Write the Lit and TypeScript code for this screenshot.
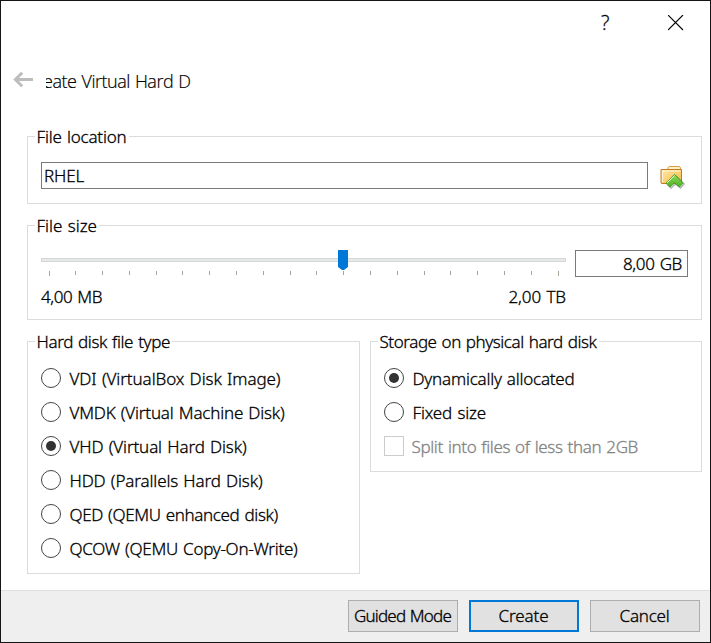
import { LitElement, html, css, svg } from "lit";
import { customElement, property } from "lit/decorators.js";

/** One line of text whose tracking is adjusted to fill a given advance width. */
@customElement("fit-text")
class FitText extends LitElement {
  @property() text = "";
  @property({ type: Number }) w = 0;
  static styles = css`
    :host { display: inline-block; white-space: pre; flex: none; word-spacing: 1px; }
  `;
  updated() {
    const span = this.renderRoot.querySelector("span") as HTMLElement;
    span.style.letterSpacing = "0px";
    const natural = span.getBoundingClientRect().width;
    span.style.letterSpacing = `${(this.w - natural) / this.text.length}px`;
  }
  render() {
    return html`<span>${this.text}</span>`;
  }
}

@customElement("group-box")
class GroupBox extends LitElement {
  @property() label = "";
  @property({ type: Number }) w = 0;
  static styles = css`
    :host { display: block; box-sizing: border-box; border: 1px solid #dcdcdc; position: relative; }
    .legend { position: absolute; left: 7px; top: -12px; height: 24px; line-height: 24px; padding: 0 2px 0 1.5px; background: #fff; }
  `;
  render() {
    return html`<div class="legend"><fit-text .text=${this.label} .w=${this.w}></fit-text></div><slot></slot>`;
  }
}

interface Option { text: string; w: number; on?: boolean }

const TYPES: Option[] = [
  { text: "VDI (VirtualBox Disk Image)", w: 211 },
  { text: "VMDK (Virtual Machine Disk)", w: 215 },
  { text: "VHD (Virtual Hard Disk)", w: 177, on: true },
  { text: "HDD (Parallels Hard Disk)", w: 193 },
  { text: "QED (QEMU enhanced disk)", w: 208.5 },
  { text: "QCOW (QEMU Copy-On-Write)", w: 228 },
];
const STORAGE: Option[] = [
  { text: "Dynamically allocated", w: 162, on: true },
  { text: "Fixed size", w: 73.5 },
];
const TICKS = Array.from({ length: 20 }, (_, i) => Math.floor(8 + (i * 509) / 19 + 0.01));

@customElement("app-root")
class AppRoot extends LitElement {
  static styles = css`
    :host { display: block; font: 17px/24px "Noto Sans", sans-serif; font-weight: 300; -webkit-text-stroke: 0.3px; color: #000; }
    * { box-sizing: border-box; }
    svg { display: block; flex: none; }
    .window { width: 711px; height: 643px; border: 1px solid #151515; background: #fff; display: flex; flex-direction: column; overflow: hidden; }
    .titlebar { height: 44px; padding: 14px 26px 0 0; display: flex; justify-content: flex-end; gap: 58px; }
    .help { font: 300 20px/16px "Open Sans", sans-serif; width: 9px; }
    .head { height: 91px; display: flex; padding: 25px 0 0 12px; }
    .title { font: 300 18px/24px "Open Sans", sans-serif; -webkit-text-stroke: 0.2px; margin: -1px 0 0 13px; height: 28px; overflow: hidden; }
    .title fit-text { margin-left: -3px; }
    .back { margin-top: 1px; }
    .main { flex: 1; padding: 0 8px 0 26px; }
    .location { height: 68px; margin-bottom: 21px; }
    .row { display: flex; }
    .location .row { padding: 25px 0 0 13px; gap: 12px; }
    .field { border: 1px solid #7a7a7a; height: 27px; line-height: 25px; }
    .path { width: 607px; padding-left: 2px; }
    .folder { margin-top: 4px; }
    .size { height: 95px; margin-bottom: 21px; }
    .size .row { padding: 24px 13px 0 13px; gap: 9px; }
    .slider { width: 525px; }
    .ends { display: flex; justify-content: space-between; margin-top: 8px; }
    .amount { width: 113px; padding-right: 5px; text-align: right; }
    .columns { display: flex; gap: 10px; align-items: flex-start; }
    .types { width: 333px; height: 233px; }
    .storage { width: 332px; height: 131px; }
    .options { padding: 26px 0 0 13px; }
    .option { height: 34px; display: flex; gap: 8.5px; line-height: 22px; }
    .circle { width: 20px; height: 20px; border: 1px solid #444; border-radius: 50%; display: grid; place-items: center; flex: none; }
    .dot { width: 10px; height: 10px; border-radius: 50%; background: #333; }
    .check { width: 20px; height: 20px; border: 1px solid #ccc; flex: none; }
    .disabled { color: #838383; gap: 7.5px; }
    .footer { height: 52px; border-top: 1px solid #dfdfdf; background: #efefef; display: flex; justify-content: flex-end; gap: 11px; padding: 9px 10px 0 0; }
    .button { width: 110px; height: 32px; border: 1px solid #adadad; background: #e1e1e1; display: flex; justify-content: center; line-height: 30px; padding-right: 1px; }
    .primary { border: 2px solid #0078d7; line-height: 28px; }
  `;

  option(o: Option) {
    return html`<div class="option">
      <span class="circle">${o.on ? html`<span class="dot"></span>` : ""}</span>
      <fit-text .text=${o.text} .w=${o.w}></fit-text>
    </div>`;
  }

  render() {
    return html`<div class="window">
      <div class="titlebar">
        <span class="help">?</span>
        <svg width="16" height="16" viewBox="0 0 16 16"><path d="M0 0l15 15M15 0l-15 15" stroke="#000" stroke-width="1.1" fill="none"/></svg>
      </div>
      <div class="head">
        <svg class="back" width="20" height="18" viewBox="0 0 20 18"><path d="M9.2 1.7L2.4 8.5l6.8 6.8M2.4 8.5H20" fill="none" stroke="#bdbdbd" stroke-width="3"/></svg>
        <div class="title"><fit-text .text=${"eate Virtual Hard D"} .w=${147.5}></fit-text></div>
      </div>
      <div class="main">
        <group-box class="location" label="File location" .w=${90}>
          <div class="row">
            <div class="field path"><fit-text .text=${"RHEL"} .w=${40}></fit-text></div>
            <svg class="folder" width="25" height="23" viewBox="0 0 25 23">
              <defs>
                <linearGradient id="f" x1="0" y1="0" x2="1" y2="1"><stop offset="0" stop-color="#ffe9a8"/><stop offset="1" stop-color="#f9b840"/></linearGradient>
                <linearGradient id="g" x1="0" y1="0" x2="0" y2="1"><stop offset="0" stop-color="#8fd860"/><stop offset="1" stop-color="#4cb422"/></linearGradient>
              </defs>
              <path d="M8 3.5V1.5L9.5.5H19l1.5 1v2" fill="#fff0c4" stroke="#d99b45"/>
              <path d="M1 3.5h20.5v14H1.5L1 17z" fill="url(#f)" stroke="#c47a24"/>
              <path d="M2.5 16V5h18" fill="none" stroke="#fff6d8"/>
              <path d="M15.500 9.5l8.5 8.500-3.500 4-5-4-4.500 4-3.500-3.500" fill="none" stroke="#555" stroke-opacity=".45" stroke-width="1.5"/>
              <path d="M14.500 8.300l8.700 8.700-3.700 4-5-4-4.500 4-4-3.700z" fill="url(#g)" stroke="#388f1c" stroke-width=".7"/>
              <path d="M14.500 9.500l-7.300 7.300" stroke="#e4ffd2" fill="none"/>
            </svg>
          </div>
        </group-box>
        <group-box class="size" label="File size" .w=${60.5}>
          <div class="row">
            <div class="slider">
              <svg width="525" height="27" viewBox="0 0 525 27">
                <rect x=".5" y="8.5" width="524" height="3" fill="#e7eaea" stroke="#d6d6d6"/>
                ${TICKS.map((x, i) => svg`<rect x=${x} y="21" width="1" height=${i === 0 || i === 19 ? 5 : 4} fill="#a5a598"/>`)}
                <path d="M297 0h10v17l-4 3h-2l-4-3z" fill="#0078d7"/>
              </svg>
              <div class="ends">
                <fit-text .text=${"4,00 MB"} .w=${61}></fit-text>
                <fit-text .text=${"2,00 TB"} .w=${57.5}></fit-text>
              </div>
            </div>
            <div class="field amount"><fit-text .text=${"8,00 GB"} .w=${59}></fit-text></div>
          </div>
        </group-box>
        <div class="columns">
          <group-box class="types" label="Hard disk file type" .w=${133.5}>
            <div class="options">${TYPES.map((o) => this.option(o))}</div>
          </group-box>
          <group-box class="storage" label="Storage on physical hard disk" .w=${217}>
            <div class="options">
              ${STORAGE.map((o) => this.option(o))}
              <div class="option disabled"><span class="check"></span><fit-text .text=${"Split into files of less than 2GB"} .w=${226.5}></fit-text></div>
            </div>
          </group-box>
        </div>
      </div>
      <div class="footer">
        <div class="button"><fit-text .text=${"Guided Mode"} .w=${97}></fit-text></div>
        <div class="button primary"><fit-text .text=${"Create"} .w=${50}></fit-text></div>
        <div class="button"><fit-text .text=${"Cancel"} .w=${50}></fit-text></div>
      </div>
    </div>`;
  }
}
